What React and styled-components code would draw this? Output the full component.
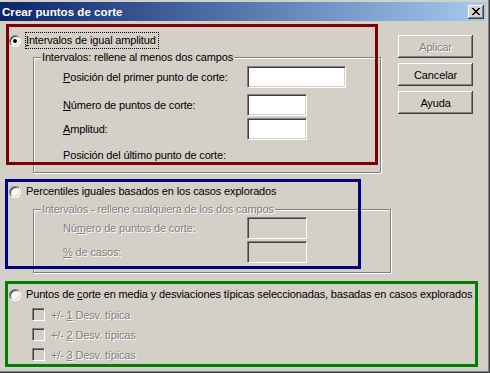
import React from "react";
import styled, { createGlobalStyle, css } from "styled-components";

const FACE = "#D4D0C8";

const GlobalStyle = createGlobalStyle`
  html, body {
    margin: 0;
    padding: 0;
    background: ${FACE};
  }
  body {
    font-family: "Liberation Sans", Arial, sans-serif;
    font-size: 11px;
    letter-spacing: -0.15px;
    color: #000;
  }
`;

const disabledText = css`
  color: #808080;
  text-shadow: 1px 1px #fff;
`;

const raised = css`
  box-shadow: inset -1px -1px #404040, inset 1px 1px #fff,
    inset -2px -2px #808080, inset 2px 2px ${FACE};
`;

const sunken = css`
  border: 1px solid;
  border-color: #808080 #fff #fff #808080;
  box-shadow: inset 1px 1px #404040, inset -1px -1px ${FACE};
`;

const Window = styled.div`
  position: relative;
  width: 490px;
  height: 373px;
  box-sizing: border-box;
  padding-top: 2px;
  background: ${FACE};
  box-shadow: inset -1px -1px #404040, inset -2px -2px #808080;
  overflow: hidden;
`;

const TitleBar = styled.div`
  height: 19px;
  margin-right: 4px;
  padding-left: 2px;
  display: flex;
  align-items: center;
  justify-content: space-between;
  background: linear-gradient(to right, #0a246a, #a6caf0);
`;

const Title = styled.span`
  color: #fff;
  font-weight: bold;
  font-size: 11.6px;
  letter-spacing: 0;
`;

const CloseButton = styled.div`
  width: 16px;
  height: 14px;
  margin-right: 2px;
  background: ${FACE};
  ${raised};
  display: flex;
  align-items: center;
  justify-content: center;
`;

const Body = styled.div`
  display: flex;
  align-items: flex-start;
`;

const Options = styled.div`
  width: 398px;
  flex-shrink: 0;
  display: flex;
  flex-direction: column;
`;

const Buttons = styled.div`
  display: flex;
  flex-direction: column;
  gap: 5px;
  padding-top: 14px;
`;

const Button = styled.button`
  width: 75px;
  height: 23px;
  padding: 0;
  border: none;
  background: ${FACE};
  ${raised};
  font: inherit;
  letter-spacing: inherit;
  color: #000;
  ${(p) => p.disabled && disabledText};
`;

const OptionRow = styled.div`
  display: flex;
  align-items: center;
  height: 17px;
  padding-left: 9px;
  margin-top: ${(p) => p.$top}px;
`;

const Radio = styled.span`
  position: relative;
  flex-shrink: 0;
  width: 12px;
  height: 12px;
  box-sizing: border-box;
  border-radius: 50%;
  background: #fff;
  ${sunken};

  ${(p) =>
    p.$checked &&
    css`
      &::after {
        content: "";
        position: absolute;
        left: 3px;
        top: 3px;
        width: 4px;
        height: 4px;
        border-radius: 50%;
        background: #000;
      }
    `}
`;

const OptionLabel = styled.span`
  margin-left: 4px;
  padding: 0 2px 0 0;
  height: 15px;
  line-height: 15px;
  border: 1px dotted ${(p) => (p.$focus ? "#000" : "transparent")};
  white-space: nowrap;
`;

const GroupBox = styled.div`
  position: relative;
  width: ${(p) => p.$width}px;
  margin: ${(p) => p.$top}px 0 0 33px;
  box-sizing: border-box;
  border: 1px solid #808080;
  box-shadow: inset 1px 1px #fff, 1px 1px #fff;
  padding: ${(p) => p.$padTop}px 0 ${(p) => p.$padBottom}px 29px;
`;

const Legend = styled.span`
  position: absolute;
  top: -7px;
  left: 7px;
  padding: 0 1px;
  line-height: 13px;
  background: ${FACE};
  white-space: nowrap;
  ${(p) => p.$disabled && disabledText};
`;

const FieldRow = styled.div`
  display: flex;
  align-items: center;
  height: ${(p) => p.$height || 22}px;
  margin-top: ${(p) => p.$top || 0}px;
`;

const FieldLabel = styled.span`
  width: 184px;
  flex-shrink: 0;
  white-space: nowrap;
  ${(p) => p.$disabled && disabledText};
`;

const TextBox = styled.input`
  width: ${(p) => p.$width}px;
  height: 22px;
  flex-shrink: 0;
  box-sizing: border-box;
  margin: 0;
  padding: 0 3px;
  outline: none;
  appearance: none;
  border-radius: 0;
  background: ${(p) => (p.disabled ? FACE : "#fff")};
  ${sunken};
`;

const CheckList = styled.div`
  display: flex;
  flex-direction: column;
  gap: 7px;
  margin-top: 5px;
  padding-left: 32px;
`;

const CheckRow = styled.div`
  display: flex;
  align-items: center;
  height: 13px;
`;

const CheckBox = styled.span`
  width: 13px;
  height: 13px;
  flex-shrink: 0;
  box-sizing: border-box;
  background: ${FACE};
  ${sunken};
`;

const CheckLabel = styled.span`
  margin-left: 6px;
  white-space: nowrap;
  ${disabledText};
`;

const U = styled.span`
  text-decoration: underline;
`;

const Mark = styled.div`
  position: absolute;
  left: ${(p) => p.$x}px;
  top: ${(p) => p.$y}px;
  width: ${(p) => p.$w}px;
  height: ${(p) => p.$h}px;
  box-sizing: border-box;
  border: 3px solid ${(p) => p.$color};
  pointer-events: none;
`;

const CloseGlyph = () => (
  <svg width="8" height="7" viewBox="0 0 8 7" shapeRendering="crispEdges">
    <path
      fill="#000"
      d="M0 0h2v1H0zM6 0h2v1H6zM1 1h2v1H1zM5 1h2v1H5zM2 2h4v1H2zM3 3h2v1H3zM2 4h4v1H2zM1 5h2v1H1zM5 5h2v1H5zM0 6h2v1H0zM6 6h2v1H6z"
    />
  </svg>
);

const deviations = [
  { n: "1", text: " Desv. típica" },
  { n: "2", text: " Desv. típicas" },
  { n: "3", text: " Desv. típicas" },
];

export default function App() {
  return (
    <>
      <GlobalStyle />
      <Window>
        <TitleBar>
          <Title>Crear puntos de corte</Title>
          <CloseButton>
            <CloseGlyph />
          </CloseButton>
        </TitleBar>

        <Body>
          <Options>
            <OptionRow $top={11}>
              <Radio $checked />
              <OptionLabel $focus>
                <U>I</U>ntervalos de igual amplitud
              </OptionLabel>
            </OptionRow>

            <GroupBox $top={8} $width={348} $padTop={8} $padBottom={9}>
              <Legend>Intervalos: rellene al menos dos campos</Legend>
              <FieldRow>
                <FieldLabel>
                  <U>P</U>osición del primer punto de corte:
                </FieldLabel>
                <TextBox $width={99} />
              </FieldRow>
              <FieldRow $top={6}>
                <FieldLabel>
                  <U>N</U>úmero de puntos de corte:
                </FieldLabel>
                <TextBox $width={60} />
              </FieldRow>
              <FieldRow $top={2}>
                <FieldLabel>
                  <U>A</U>mplitud:
                </FieldLabel>
                <TextBox $width={60} />
              </FieldRow>
              <FieldRow $top={7} $height={16}>
                <FieldLabel>Posición del último punto de corte:</FieldLabel>
              </FieldRow>
            </GroupBox>

            <OptionRow $top={10}>
              <Radio />
              <OptionLabel>
                Percentiles i<U>g</U>uales basados en los casos explorados
              </OptionLabel>
            </OptionRow>

            <GroupBox $top={9} $width={358} $padTop={7} $padBottom={9}>
              <Legend $disabled>
                Intervalos - rellene cualquiera de los dos campos
              </Legend>
              <FieldRow>
                <FieldLabel $disabled>
                  Nú<U>m</U>ero de puntos de corte:
                </FieldLabel>
                <TextBox $width={60} disabled />
              </FieldRow>
              <FieldRow $top={2}>
                <FieldLabel $disabled>
                  <U>%</U> de casos:
                </FieldLabel>
                <TextBox $width={60} disabled />
              </FieldRow>
            </GroupBox>

            <OptionRow $top={13}>
              <Radio />
              <OptionLabel>
                Puntos de <U>c</U>orte en media y desviaciones típicas
                seleccionadas, basadas en casos explorados
              </OptionLabel>
            </OptionRow>

            <CheckList>
              {deviations.map((d) => (
                <CheckRow key={d.n}>
                  <CheckBox />
                  <CheckLabel>
                    +/- <U>{d.n}</U>
                    {d.text}
                  </CheckLabel>
                </CheckRow>
              ))}
            </CheckList>
          </Options>

          <Buttons>
            <Button disabled>Aplicar</Button>
            <Button>Cancelar</Button>
            <Button>Ayuda</Button>
          </Buttons>
        </Body>

        <Mark $color="#800000" $x={6} $y={24} $w={372} $h={141} />
        <Mark $color="#000080" $x={5} $y={179} $w={356} $h={90} />
        <Mark $color="#008000" $x={5} $y={281} $w={473} $h={86} />
      </Window>
    </>
  );
}
